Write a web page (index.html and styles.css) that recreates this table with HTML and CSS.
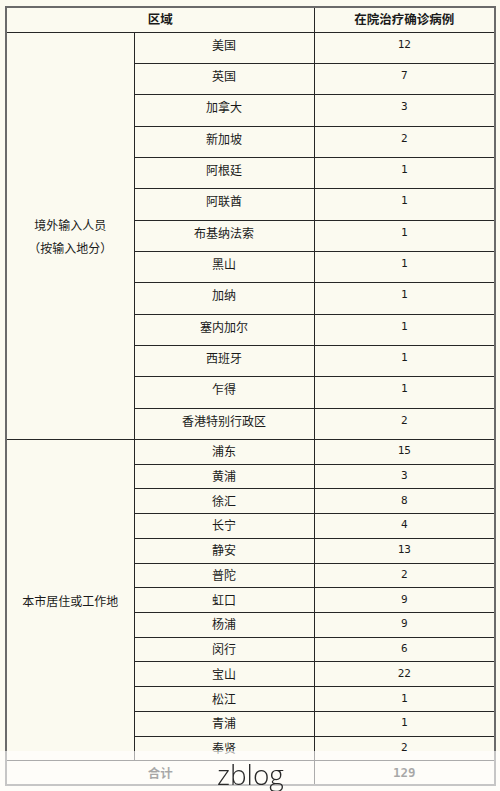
FILE: index.html
```html
<!DOCTYPE html>
<html lang="zh-CN">
<head>
<meta charset="utf-8">
<title>在院治疗确诊病例</title>
<link rel="stylesheet" href="styles.css">
</head>
<body>
<table class="data">
  <colgroup><col class="c1"><col class="c2"><col class="c3"></colgroup>
  <thead>
    <tr class="head"><th colspan="2">区域</th><th>在院治疗确诊病例</th></tr>
  </thead>
  <tbody>
    <tr class="r1"><td rowspan="13" class="grp">境外输入人员<br>（按输入地分）</td><td>美国</td><td class="num">12</td></tr>
    <tr class="r1"><td>英国</td><td class="num">7</td></tr>
    <tr class="r1"><td>加拿大</td><td class="num">3</td></tr>
    <tr class="r1"><td>新加坡</td><td class="num">2</td></tr>
    <tr class="r1"><td>阿根廷</td><td class="num">1</td></tr>
    <tr class="r1"><td>阿联酋</td><td class="num">1</td></tr>
    <tr class="r1"><td>布基纳法索</td><td class="num">1</td></tr>
    <tr class="r1"><td>黑山</td><td class="num">1</td></tr>
    <tr class="r1"><td>加纳</td><td class="num">1</td></tr>
    <tr class="r1"><td>塞内加尔</td><td class="num">1</td></tr>
    <tr class="r1"><td>西班牙</td><td class="num">1</td></tr>
    <tr class="r1"><td>乍得</td><td class="num">1</td></tr>
    <tr class="r1"><td>香港特别行政区</td><td class="num">2</td></tr>
    <tr class="r2"><td rowspan="13" class="grp">本市居住或工作地</td><td>浦东</td><td class="num">15</td></tr>
    <tr class="r2"><td>黄浦</td><td class="num">3</td></tr>
    <tr class="r2"><td>徐汇</td><td class="num">8</td></tr>
    <tr class="r2"><td>长宁</td><td class="num">4</td></tr>
    <tr class="r2"><td>静安</td><td class="num">13</td></tr>
    <tr class="r2"><td>普陀</td><td class="num">2</td></tr>
    <tr class="r2"><td>虹口</td><td class="num">9</td></tr>
    <tr class="r2"><td>杨浦</td><td class="num">9</td></tr>
    <tr class="r2"><td>闵行</td><td class="num">6</td></tr>
    <tr class="r2"><td>宝山</td><td class="num">22</td></tr>
    <tr class="r2"><td>松江</td><td class="num">1</td></tr>
    <tr class="r2"><td>青浦</td><td class="num">1</td></tr>
    <tr class="r2"><td>奉贤</td><td class="num">2</td></tr>
    <tr class="total"><th colspan="2">合计</th><th class="num">129</th></tr>
  </tbody>
</table>
<div class="fade"><span class="mark">zblog</span></div>
</body>
</html>
```
FILE: styles.css
```css
html, body {
  margin: 0;
  background: #fbfaf0;
}
body {
  padding: 6px 0 0 5px;
  font-family: "Noto Sans CJK SC", "Liberation Sans", sans-serif;
  color: #1a1a1a;
  font-size: 12px;
}
.data {
  border-collapse: collapse;
  table-layout: fixed;
  width: 489px;
  border: 2px solid #6a6a6a;
}
.c1 { width: 128px; }
.c2 { width: 180px; }
.c3 { width: 181px; }
.data th, .data td {
  border: 1px solid #262626;
  padding: 0;
  text-align: center;
  vertical-align: middle;
  line-height: 16px;
}
.data th {
  font-size: 12.5px;
  font-weight: bold;
}
.head { height: 25px; }
.head th { padding-bottom: 1px; }
.r1 { height: 31.35px; }
.r1 td { padding-bottom: 6px; }
.r1 td.grp { padding-bottom: 0; }
.r2 { height: 24.72px; }
.r2 td { padding-bottom: 1px; }
.r2 td.grp { padding-bottom: 0; }
.total { height: 24px; }
.grp {
  line-height: 23px !important;
}
.num {
  font-family: "DejaVu Sans Mono", "Liberation Mono", monospace;
  font-size: 11px;
}
.fade {
  position: fixed;
  left: 0;
  right: 0;
  bottom: 0;
  height: 40px;
  background: rgba(255, 255, 255, 0.62);
}
.mark {
  position: absolute;
  left: 217px;
  top: 7px;
  font-family: "Open Sans", sans-serif;
  font-weight: 300;
  font-size: 28px;
  line-height: 32px;
  color: #2a2a2a;
}
```
